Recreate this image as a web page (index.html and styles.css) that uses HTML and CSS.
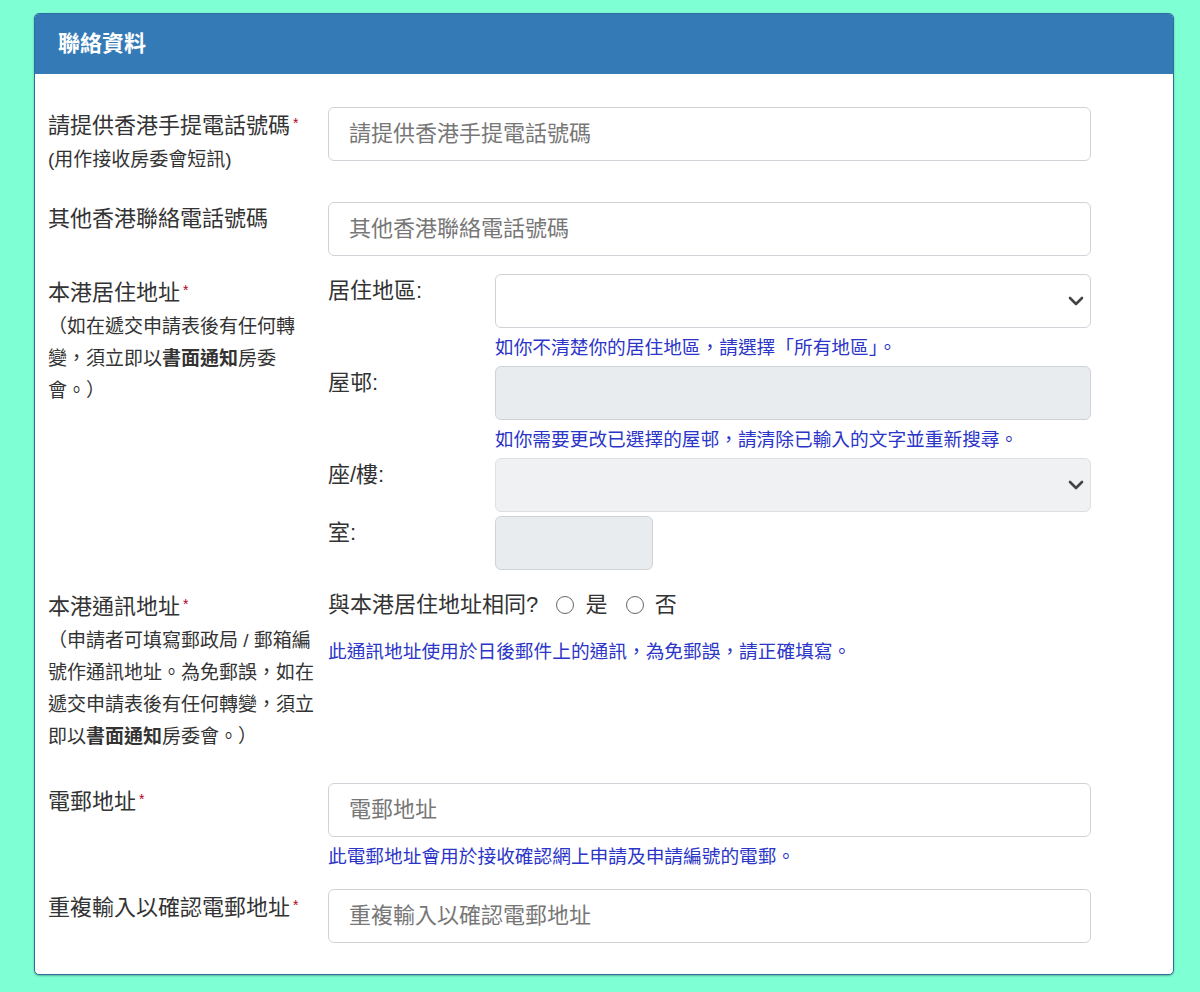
FILE: index.html
```html
<!DOCTYPE html>
<html lang="zh-Hant">
<head>
  <meta charset="UTF-8">
  <title>聯絡資料</title>
  <link rel="stylesheet" href="styles.css">
</head>
<body>
<div class="panel">
  <div class="panel-heading">聯絡資料</div>

  <div class="panel-body">

    <!-- Mobile phone -->
    <div class="form-row">
      <div class="form-label">
        <div class="label-main">請提供香港手提電話號碼<span class="req">*</span></div>
        <div class="label-note">(用作接收房委會短訊)</div>
      </div>
      <div class="form-field">
        <input class="form-control" type="text" placeholder="請提供香港手提電話號碼">
      </div>
    </div>

    <!-- Other phone -->
    <div class="form-row">
      <div class="form-label">
        <div class="label-main">其他香港聯絡電話號碼</div>
      </div>
      <div class="form-field">
        <input class="form-control" type="text" placeholder="其他香港聯絡電話號碼">
      </div>
    </div>

    <!-- Residential address -->
    <div class="form-row">
      <div class="form-label">
        <div class="label-main">本港居住地址<span class="req">*</span></div>
        <div class="label-note">（如在遞交申請表後有任何轉變，須立即以<b>書面通知</b>房委會。）</div>
      </div>
      <div class="form-field">
        <div class="sub-row">
          <div class="sub-label">居住地區:</div>
          <div class="sub-field">
            <div class="select-wrap">
              <select class="form-control"><option></option></select>
              <svg class="chevron" width="16" height="10" viewBox="0 0 16 10"><path d="M2 2l6 6 6-6" fill="none" stroke="#444" stroke-width="2.6" stroke-linecap="round" stroke-linejoin="round"/></svg>
            </div>
            <div class="help">如你不清楚你的居住地區，請選擇「所有地區」。</div>
          </div>
        </div>
        <div class="sub-row">
          <div class="sub-label">屋邨:</div>
          <div class="sub-field">
            <input class="form-control" type="text" disabled>
            <div class="help">如你需要更改已選擇的屋邨，請清除已輸入的文字並重新搜尋。</div>
          </div>
        </div>
        <div class="sub-row">
          <div class="sub-label">座/樓:</div>
          <div class="sub-field">
            <div class="select-wrap">
              <select class="form-control" disabled><option></option></select>
              <svg class="chevron" width="16" height="10" viewBox="0 0 16 10"><path d="M2 2l6 6 6-6" fill="none" stroke="#444" stroke-width="2.6" stroke-linecap="round" stroke-linejoin="round"/></svg>
            </div>
          </div>
        </div>
        <div class="sub-row">
          <div class="sub-label">室:</div>
          <div class="sub-field">
            <input class="form-control room" type="text" disabled>
          </div>
        </div>
      </div>
    </div>

    <!-- Correspondence address -->
    <div class="form-row form-row-loose">
      <div class="form-label">
        <div class="label-main">本港通訊地址<span class="req">*</span></div>
        <div class="label-note">（申請者可填寫郵政局 / 郵箱編號作通訊地址。為免郵誤，如在遞交申請表後有任何轉變，須立即以<b>書面通知</b>房委會。）</div>
      </div>
      <div class="form-field">
        <div class="same-line">
          與本港居住地址相同?
          <label class="radio"><input type="radio" name="same"> 是</label>
          <label class="radio"><input type="radio" name="same"> 否</label>
        </div>
        <div class="help help-gap">此通訊地址使用於日後郵件上的通訊，為免郵誤，請正確填寫。</div>
      </div>
    </div>

    <!-- Email -->
    <div class="form-row">
      <div class="form-label">
        <div class="label-main">電郵地址<span class="req">*</span></div>
      </div>
      <div class="form-field">
        <input class="form-control" type="text" placeholder="電郵地址">
        <div class="help">此電郵地址會用於接收確認網上申請及申請編號的電郵。</div>
      </div>
    </div>

    <!-- Confirm email -->
    <div class="form-row">
      <div class="form-label">
        <div class="label-main">重複輸入以確認電郵地址<span class="req">*</span></div>
      </div>
      <div class="form-field">
        <input class="form-control" type="text" placeholder="重複輸入以確認電郵地址">
      </div>
    </div>

  </div>
</div>
</body>
</html>
```

FILE: styles.css
```css
body {
  margin: 0;
  padding: 13px 26px 19px 34px;
  background-color: #7fffd4;
  font-family: "Liberation Sans", "Noto Sans CJK TC", sans-serif;
  color: #333;
}

/* Card */
.panel {
  background-color: #fff;
  border: 1px solid #2f6f9f;
  border-radius: 5px;
  box-shadow: 0 1px 2px rgba(0, 0, 0, 0.3);
  overflow: hidden;
}
.panel-heading {
  background-color: #337ab7;
  color: #fff;
  font-size: 22px;
  font-weight: bold;
  height: 60px;
  line-height: 60px;
  padding-left: 23px;
}
.panel-body {
  padding: 33px 0 31px 13px;
}

/* Rows */
.form-row {
  display: flex;
  align-items: flex-start;
  gap: 8px;
  margin-bottom: 18px;
}
.form-row-loose {
  margin-bottom: 22px;
}
.form-row:last-child {
  margin-bottom: 0;
}
.form-label {
  width: 272px;
  flex-shrink: 0;
}
.label-main {
  font-size: 22px;
  line-height: 33px;
}
.label-note {
  font-size: 19px;
  line-height: 32px;
  margin-top: 2px;
  padding-bottom: 8px;
  word-break: break-all;
}
.label-note b {
  font-weight: bold;
}
.req {
  color: #b0001e;
  font-size: 14px;
  vertical-align: 5px;
  margin-left: 3px;
}
.form-field {
  width: 763px;
}

/* Inputs */
.form-control {
  display: block;
  box-sizing: border-box;
  width: 100%;
  height: 54px;
  margin: 0;
  padding: 0 20px;
  border: 1px solid #cfd3d7;
  border-radius: 6px;
  background-color: #fff;
  font-family: inherit;
  font-size: 22px;
  color: #333;
  outline: none;
}
.form-control::placeholder {
  color: #777;
}
.form-control:disabled {
  background-color: #e9ecef;
}
select.form-control {
  appearance: none;
  -webkit-appearance: none;
}
.select-wrap {
  position: relative;
}
.chevron {
  position: absolute;
  right: 7px;
  top: 22px;
  pointer-events: none;
}
.form-control.room {
  width: 158px;
}

/* Address sub rows */
.sub-row {
  display: flex;
  align-items: flex-start;
  margin-bottom: 4px;
}
.sub-row:last-child {
  margin-bottom: 0;
}
.sub-label {
  width: 167px;
  flex-shrink: 0;
  font-size: 22px;
  line-height: 33px;
}
.sub-field {
  flex: 1;
}

.help {
  color: #2b35c8;
  font-size: 18.7px;
  line-height: 28px;
  margin-top: 6px;
}
.help-gap {
  margin-top: 17px;
}

/* Radios */
.same-line {
  font-size: 22px;
  line-height: 33px;
}
.radio {
  margin-left: 12px;
}
.radio input {
  appearance: none;
  -webkit-appearance: none;
  width: 18px;
  height: 18px;
  margin: 0 5px 0 0;
  border: 1px solid #666;
  border-radius: 50%;
  vertical-align: -2px;
}
```
